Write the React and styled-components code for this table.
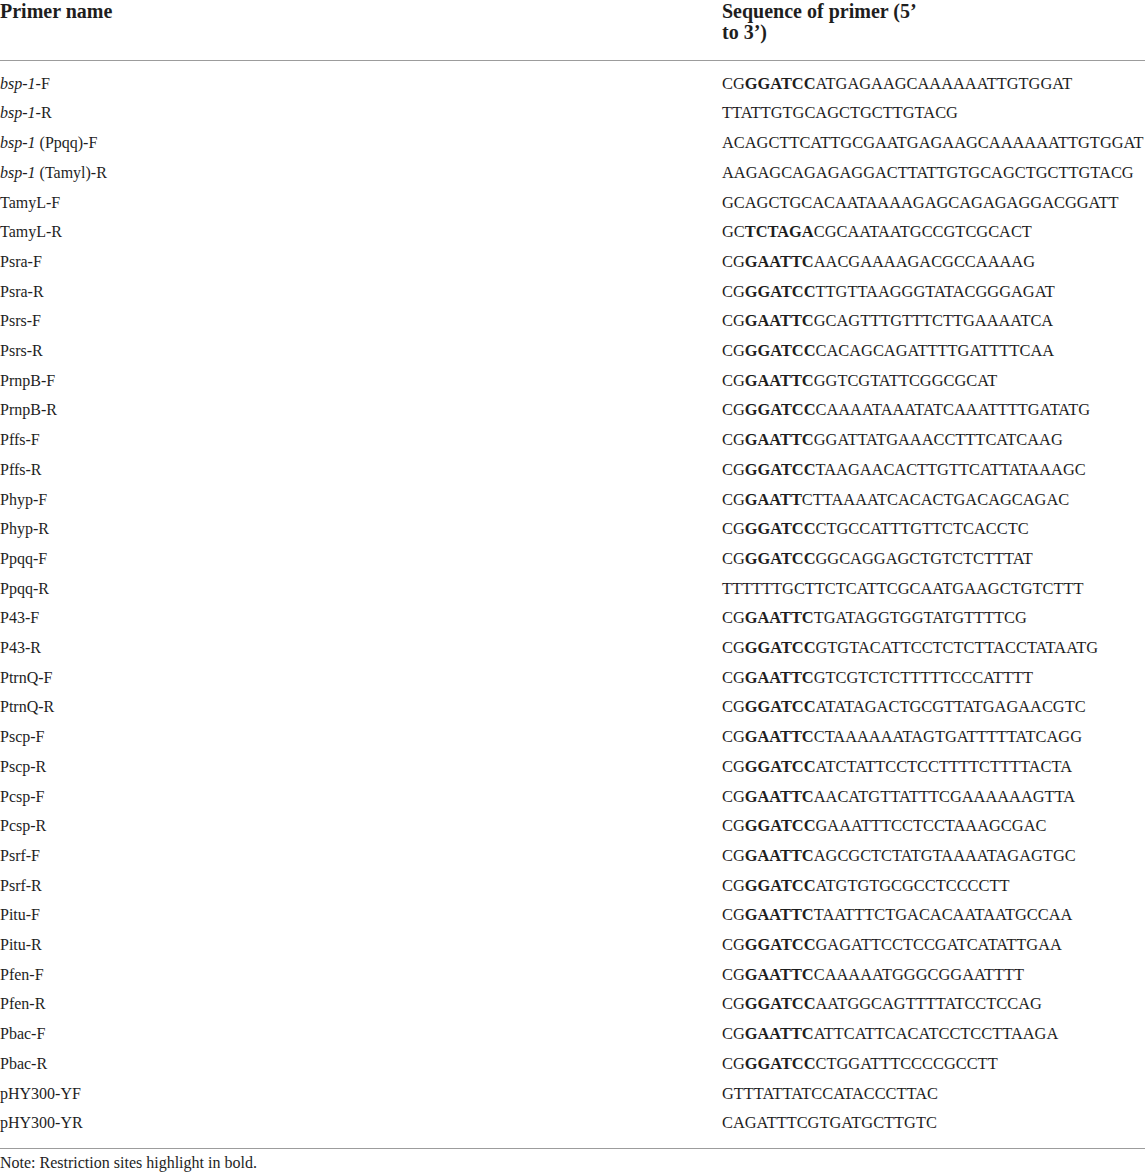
import React from "react";
import styled, { createGlobalStyle } from "styled-components";

const GlobalStyle = createGlobalStyle`
  html, body { margin: 0; padding: 0; background: #ffffff; }
  body {
    font-family: "Liberation Serif", "Times New Roman", serif;
    color: #1e1e1e;
    -webkit-font-smoothing: antialiased;
  }
`;

const Page = styled.div`
  width: 1145px;
`;

const Table = styled.div`
  display: flex;
  flex-direction: column;
`;

const HeaderRow = styled.div`
  display: grid;
  grid-template-columns: 722px 1fr;
  padding-top: 1px;
  padding-bottom: 17px;
  border-bottom: 1px solid #9c9c9c;
`;

const HeadCell = styled.div`
  font-size: 20px;
  font-weight: 700;
  line-height: 21px;
  max-width: ${(p) => p.$max || "none"};
`;

const Body = styled.div`
  display: flex;
  flex-direction: column;
  padding-top: 7.7px;
  padding-bottom: 9.7px;
  border-bottom: 1px solid #9c9c9c;
`;

const Row = styled.div`
  display: grid;
  grid-template-columns: 722px 1fr;
  height: 29.71px;
  line-height: 29.71px;
`;

const NameCell = styled.div`
  font-size: 16px;
  white-space: nowrap;
`;

const SeqCell = styled.div`
  font-size: 16.4px;
  white-space: nowrap;
`;

const Site = styled.b`
  font-weight: 700;
`;

const Gene = styled.i`
  font-style: italic;
`;

const Note = styled.div`
  margin-top: 4.6px;
  font-size: 16px;
  line-height: 20px;
`;

const rows = [
  [["bsp-1", "-F"], ["CG", "GGATCC", "ATGAGAAGCAAAAAATTGTGGAT"]],
  [["bsp-1", "-R"], ["", "", "TTATTGTGCAGCTGCTTGTACG"]],
  [["bsp-1", " (Ppqq)-F"], ["", "", "ACAGCTTCATTGCGAATGAGAAGCAAAAAATTGTGGAT"]],
  [["bsp-1", " (Tamyl)-R"], ["", "", "AAGAGCAGAGAGGACTTATTGTGCAGCTGCTTGTACG"]],
  [["", "TamyL-F"], ["", "", "GCAGCTGCACAATAAAAGAGCAGAGAGGACGGATT"]],
  [["", "TamyL-R"], ["GC", "TCTAGA", "CGCAATAATGCCGTCGCACT"]],
  [["", "Psra-F"], ["CG", "GAATTC", "AACGAAAAGACGCCAAAAG"]],
  [["", "Psra-R"], ["CG", "GGATCC", "TTGTTAAGGGTATACGGGAGAT"]],
  [["", "Psrs-F"], ["CG", "GAATTC", "GCAGTTTGTTTCTTGAAAATCA"]],
  [["", "Psrs-R"], ["CG", "GGATCC", "CACAGCAGATTTTGATTTTCAA"]],
  [["", "PrnpB-F"], ["CG", "GAATTC", "GGTCGTATTCGGCGCAT"]],
  [["", "PrnpB-R"], ["CG", "GGATCC", "CAAAATAAATATCAAATTTTGATATG"]],
  [["", "Pffs-F"], ["CG", "GAATTC", "GGATTATGAAACCTTTCATCAAG"]],
  [["", "Pffs-R"], ["CG", "GGATCC", "TAAGAACACTTGTTCATTATAAAGC"]],
  [["", "Phyp-F"], ["CG", "GAATT", "CTTAAAATCACACTGACAGCAGAC"]],
  [["", "Phyp-R"], ["CG", "GGATCC", "CTGCCATTTGTTCTCACCTC"]],
  [["", "Ppqq-F"], ["CG", "GGATCC", "GGCAGGAGCTGTCTCTTTAT"]],
  [["", "Ppqq-R"], ["", "", "TTTTTTGCTTCTCATTCGCAATGAAGCTGTCTTT"]],
  [["", "P43-F"], ["CG", "GAATTC", "TGATAGGTGGTATGTTTTCG"]],
  [["", "P43-R"], ["CG", "GGATCC", "GTGTACATTCCTCTCTTACCTATAATG"]],
  [["", "PtrnQ-F"], ["CG", "GAATTC", "GTCGTCTCTTTTTCCCATTTT"]],
  [["", "PtrnQ-R"], ["CG", "GGATCC", "ATATAGACTGCGTTATGAGAACGTC"]],
  [["", "Pscp-F"], ["CG", "GAATTC", "CTAAAAAATAGTGATTTTTATCAGG"]],
  [["", "Pscp-R"], ["CG", "GGATCC", "ATCTATTCCTCCTTTTCTTTTACTA"]],
  [["", "Pcsp-F"], ["CG", "GAATTC", "AACATGTTATTTCGAAAAAAGTTA"]],
  [["", "Pcsp-R"], ["CG", "GGATCC", "GAAATTTCCTCCTAAAGCGAC"]],
  [["", "Psrf-F"], ["CG", "GAATTC", "AGCGCTCTATGTAAAATAGAGTGC"]],
  [["", "Psrf-R"], ["CG", "GGATCC", "ATGTGTGCGCCTCCCCTT"]],
  [["", "Pitu-F"], ["CG", "GAATTC", "TAATTTCTGACACAATAATGCCAA"]],
  [["", "Pitu-R"], ["CG", "GGATCC", "GAGATTCCTCCGATCATATTGAA"]],
  [["", "Pfen-F"], ["CG", "GAATTC", "CAAAAATGGGCGGAATTTT"]],
  [["", "Pfen-R"], ["CG", "GGATCC", "AATGGCAGTTTTATCCTCCAG"]],
  [["", "Pbac-F"], ["CG", "GAATTC", "ATTCATTCACATCCTCCTTAAGA"]],
  [["", "Pbac-R"], ["CG", "GGATCC", "CTGGATTTCCCCGCCTT"]],
  [["", "pHY300-YF"], ["", "", "GTTTATTATCCATACCCTTAC"]],
  [["", "pHY300-YR"], ["", "", "CAGATTTCGTGATGCTTGTC"]],
];

export default function App() {
  return (
    <Page>
      <GlobalStyle />
      <Table>
        <HeaderRow>
          <HeadCell>Primer name</HeadCell>
          <HeadCell $max="205px">Sequence of primer (5’ to 3’)</HeadCell>
        </HeaderRow>
        <Body>
          {rows.map(([name, seq], i) => (
            <Row key={i}>
              <NameCell>
                {name[0] && <Gene>{name[0]}</Gene>}
                {name[1]}
              </NameCell>
              <SeqCell>
                {seq[0]}
                {seq[1] && <Site>{seq[1]}</Site>}
                {seq[2]}
              </SeqCell>
            </Row>
          ))}
        </Body>
      </Table>
      <Note>Note: Restriction sites highlight in bold.</Note>
    </Page>
  );
}
